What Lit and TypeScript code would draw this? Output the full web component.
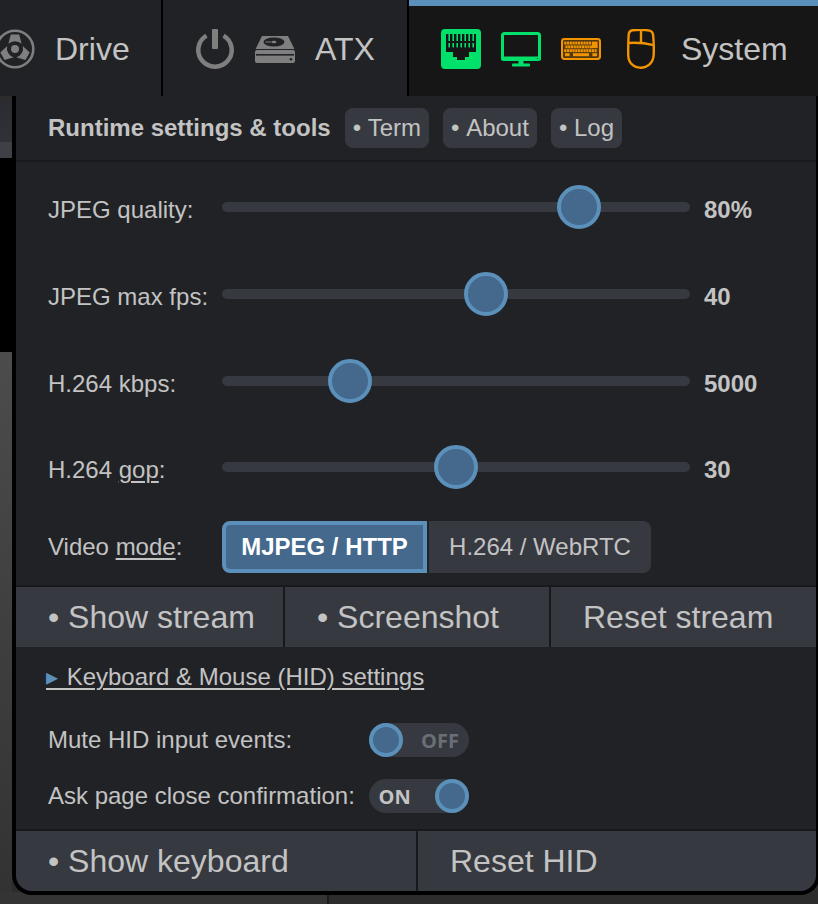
import { LitElement, html, css, svg } from "lit";
import { customElement } from "lit/decorators.js";

const grey = "#7f7f7f";
const green = "#00e06a";
const orange = "#f29400";

const blade = "M15.8 5.500h8.400l2.400 9.300a9.500 9.500 0 0 0-13.200 0z";
const driveIcon = svg`<svg class="ic drive" viewBox="0 0 40 40">
  <circle cx="20" cy="20" r="18.300" fill="none" stroke="${grey}" stroke-width="2.600"/>
  <circle cx="20" cy="20" r="4" fill="${grey}"/>
  <path d="${blade}" fill="${grey}"/>
  <path d="${blade}" fill="${grey}" transform="rotate(120 20 20)"/>
  <path d="${blade}" fill="${grey}" transform="rotate(240 20 20)"/>
</svg>`;

const powerIcon = svg`<svg class="ic" viewBox="0 0 40 40">
  <path d="M11.500 6.600a16.700 16.700 0 1 0 17 0" fill="none" stroke="${grey}" stroke-width="4.500" stroke-linecap="butt"/>
  <rect x="17" y="0" width="6" height="20" rx="1" fill="${grey}"/>
</svg>`;

const hddIcon = svg`<svg class="ic hdd" viewBox="0 0 40 28">
  <path d="M7 1h26l6.400 13H.6z" fill="${grey}"/>
  <rect x="0" y="15" width="40" height="13" rx="2" fill="${grey}"/>
  <rect x="1" y="19" width="38" height="1.600" fill="#212226"/>
  <circle cx="36" cy="24.200" r="1.300" fill="#212226"/>
  <ellipse cx="19" cy="7" rx="10.500" ry="4.600" fill="#212226"/>
  <ellipse cx="19" cy="7" rx="2.400" ry="1.200" fill="${grey}"/>
  <rect x="10.500" y="6.500" width="6" height="1" fill="${grey}"/>
</svg>`;

const pins = [3, 7, 11, 15, 19, 23, 27];
const netIcon = svg`<svg class="ic" viewBox="0 0 40 40">
  <rect width="40" height="40" rx="4" fill="${green}"/>
  <path d="M5 5h30v18h-7v5h-4v3H16v-3h-4v-5H5z" fill="#161616"/>
  ${pins.map((p) => svg`<rect x="${p + 4.4}" y="5" width="1.600" height="7" fill="${green}"/>
    <rect x="${p + 4.4}" y="14" width="1.600" height="4.400" fill="${green}"/>`)}
  <rect x="5" y="12" width="30" height="2" fill="#161616"/>
</svg>`;

const screenIcon = svg`<svg class="ic mon" viewBox="0 0 40 35">
  <rect x="1.500" y="1.500" width="37" height="26" rx="2" fill="none" stroke="${green}" stroke-width="3"/>
  <rect x="0" y="24.500" width="40" height="4" rx="1.500" fill="${green}"/>
  <rect x="17.500" y="28" width="5" height="4" fill="${green}"/>
  <rect x="11" y="31.500" width="18" height="3" rx="1" fill="${green}"/>
  <circle cx="36.600" cy="26.500" r=".6" fill="#161616"/>
</svg>`;

const keyRows: [number, number, number][] = [
  [3.6, 3.2, 10],
  [7.4, 4.4, 10],
  [11.2, 3.2, 12],
];
const kbIcon = svg`<svg class="ic kb" viewBox="0 0 40 22">
  <rect x="1" y="1" width="38" height="20" rx="2.400" fill="none" stroke="${orange}" stroke-width="2"/>
  <rect x="2" y="2" width="36" height="18" fill="${orange}" opacity=".28"/>
  ${keyRows.map(([y, x0, n]) =>
    Array.from({ length: n }, (_, i) => svg`<rect x="${x0 + i * 2.75}" y="${y}" width="2.200" height="2.900" fill="${orange}"/>`)
  )}
  <rect x="31" y="3.600" width="5.600" height="6.500" fill="${orange}"/>
  <rect x="4" y="15.200" width="4.600" height="3" fill="${orange}"/>
  <rect x="12" y="15.200" width="16" height="3" fill="${orange}"/>
  <rect x="31.400" y="15.200" width="4.600" height="3" fill="${orange}"/>
</svg>`;

const mouseIcon = svg`<svg class="ic mouse" viewBox="0 0 28 40">
  <path d="M5.600 1.300c5-.6 12.500-.6 17 .4 2.400.5 3.400 2.400 3.600 5 .6 7 .8 14 .4 20-.5 7-6 12-13 12S1.600 34 1.300 27C1 20 1.300 13 1.600 6.500c.1-2.800 1.400-4.900 4-5.200z" fill="none" stroke="${orange}" stroke-width="2.400"/>
  <path d="M1.600 14c8-.6 17 .2 25 2.200M14 1.200V14.500" fill="none" stroke="${orange}" stroke-width="2.400"/>
</svg>`;

const sliders = [
  { label: html`JPEG quality:`, value: "80%", pos: 0.79 },
  { label: html`JPEG max fps:`, value: "40", pos: 0.571 },
  { label: html`H.264 kbps:`, value: "5000", pos: 0.25 },
  { label: html`H.264 <u>gop</u>:`, value: "30", pos: 0.5 },
];

@customElement("app-root")
export class AppRoot extends LitElement {
  static styles = css`
    :host {
      display: block;
      position: relative;
      width: 818px;
      height: 904px;
      overflow: hidden;
      background: #2c2c2c;
      font-family: "Liberation Sans", Arial, sans-serif;
      color: #c3c3c3;
    }
    u { text-decoration-thickness: 2px; text-underline-offset: 3px; }

    .backdrop { position: absolute; inset: 96px 0 0 0; }
    .b1 { position: absolute; left: 0; top: 4px; width: 12px; height: 42px; background: linear-gradient(#2a2c32, #303238); }
    .b2 { position: absolute; left: 0; top: 46px; width: 12px; height: 16px; background: #3e4046; }
    .b3 { position: absolute; left: 0; top: 62px; width: 12px; height: 194px; background: #000; }
    .b4 { position: absolute; left: 0; top: 256px; width: 12px; bottom: 0; background: linear-gradient(#4c4c4c, #323232); }
    .b5 { position: absolute; left: 0; bottom: 0; width: 327px; height: 12px; background: #343434; }
    .b6 { position: absolute; left: 327px; bottom: 0; width: 2px; height: 12px; background: #1c1c1c; }

    .topbar { position: relative; display: flex; height: 96px; font-size: 32px; }
    .tab { display: flex; align-items: center; background: #212226; border-right: 2px solid #000; box-sizing: border-box; height: 96px; padding-top: 2px; }
    .tab.drive-tab { width: 163px; padding-left: 55px; position: relative; }
    .tab.atx { width: 246px; padding-left: 32px; }
    .tab.system { flex: 1; border-right: 0; background: #161616; border-top: 6px solid #5b90bb; padding: 0 0 4px 32px; }

    .ic { display: block; width: 40px; height: 40px; flex: none; }
    .ic.drive { position: absolute; left: -5px; top: 29px; }
    .ic.hdd { height: 28px; margin: -1px 20px 0 20px; }
    .ic.mon { height: 35px; margin: 0 20px; }
    .ic.kb { height: 22px; }
    .ic.mouse { width: 28px; margin: 0 26px; }

    .panel {
      position: relative;
      width: 808px;
      height: 799px;
      box-sizing: border-box;
      border: 4px solid #000;
      border-top: 0;
      border-radius: 0 0 20px 20px;
      background: #212226;
      overflow: hidden;
      margin-left: 12px;
      font-size: 24px;
    }

    .head {
      height: 64px;
      display: flex;
      align-items: center;
      gap: 14px;
      padding-left: 32px;
      border-bottom: 2px solid #18191c;
    }
    .head b { font-weight: 700; font-size: 24px; }
    .chip {
      display: flex;
      align-items: center;
      height: 40px;
      padding: 0 8px;
      border-radius: 8px;
      background: #363940;
      font-size: 24px;
      white-space: pre;
    }

    .sliders { padding-top: 5px; }
    .row { display: flex; align-items: center; height: 86.67px; padding-left: 32px; }
    .label { width: 174px; flex: none; white-space: nowrap; font-size: 24px; }
    .track { position: relative; width: 468px; height: 10px; border-radius: 5px; background: #363940; margin-bottom: 6px; flex: none; }
    .thumb {
      position: absolute;
      top: -17px;
      width: 44px;
      height: 44px;
      box-sizing: border-box;
      border: 4px solid #5b90bb;
      border-radius: 50%;
      background: #44698d;
    }
    .value { margin-left: 14px; font-weight: 700; font-size: 24px; }

    .mode { display: flex; align-items: center; height: 52px; margin-top: 7.500px; padding-left: 32px; }
    .seg { display: flex; gap: 2px; }
    .seg span { display: flex; align-items: center; justify-content: center; height: 52px; box-sizing: border-box; font-size: 24px; }
    .seg .on {
      width: 205px;
      background: #44698d;
      border: 4px solid #5b90bb;
      border-radius: 8px 0 0 8px;
      color: #fff;
      font-weight: 700;
    }
    .seg .off { width: 222px; background: #363940; border-radius: 0 8px 8px 0; }

    .btns {
      display: grid;
      gap: 2px;
      margin-top: 12px;
      padding-top: 2px;
      background: #18191c;
      font-size: 32px;
    }
    .btns.s { grid-template-columns: 267px 264px 1fr; }
    .btns.k { grid-template-columns: 400px 1fr; margin-top: 0; }
    .btns div { height: 60px; display: flex; align-items: center; padding-left: 32px; background: #363940; white-space: pre; }

    .hid-title { height: 60px; display: flex; align-items: center; padding-left: 30px; }
    .hid-title span.t { text-decoration: underline; text-decoration-thickness: 2px; text-underline-offset: 3px; white-space: pre; font-size: 24px; }
    .hid-title i { font-style: normal; color: #5b90bb; letter-spacing: 2px; }

    .toggles { display: flex; flex-direction: column; gap: 22px; padding: 16px 0 16px 32px; }
    .tr { display: flex; align-items: center; height: 34px; }
    .tr .label { width: 321px; }
    .sw {
      position: relative;
      width: 100px;
      height: 34px;
      border-radius: 17px;
      background: #363940;
      font: 700 20px "Open Sans", sans-serif;
      display: flex;
      align-items: center;
    }
    .sw .knob {
      position: absolute;
      top: 0;
      width: 34px;
      height: 34px;
      box-sizing: border-box;
      border: 4px solid #5b90bb;
      border-radius: 50%;
      background: #44698d;
    }
    .sw.off { color: #6a6e75; }
    .sw.off .knob { left: 0; }
    .sw.off span { margin-left: 52px; }
    .sw.on .knob { right: 0; }
    .sw.on span { margin-left: 9.500px; }
  `;

  render() {
    return html`
      <div class="backdrop">
        <div class="b1"></div><div class="b2"></div><div class="b3"></div>
        <div class="b4"></div><div class="b5"></div><div class="b6"></div>
      </div>
      <div class="topbar">
        <div class="tab drive-tab">${driveIcon}Drive</div>
        <div class="tab atx">${powerIcon}${hddIcon}ATX</div>
        <div class="tab system">${netIcon}${screenIcon}${kbIcon}${mouseIcon}System</div>
      </div>
      <div class="panel">
        <div class="head">
          <b>Runtime settings &amp; tools</b>
          <div class="chip">•&nbsp;Term</div>
          <div class="chip">•&nbsp;About</div>
          <div class="chip">•&nbsp;Log</div>
        </div>
        <div class="sliders">
          ${sliders.map(
            (s) => html`<div class="row">
              <div class="label">${s.label}</div>
              <div class="track"><div class="thumb" style="left:${s.pos * 424}px"></div></div>
              <div class="value">${s.value}</div>
            </div>`
          )}
        </div>
        <div class="mode">
          <div class="label">Video <u>mode</u>:</div>
          <div class="seg"><span class="on">MJPEG / HTTP</span><span class="off">H.264 / WebRTC</span></div>
        </div>
        <div class="btns s">
          <div>• Show stream</div>
          <div>• Screenshot</div>
          <div>Reset stream</div>
        </div>
        <div class="hid-title"><span class="t"><i>▸</i> Keyboard &amp; Mouse (HID) settings</span></div>
        <div class="toggles">
          <div class="tr">
            <div class="label">Mute HID input events:</div>
            <div class="sw off"><div class="knob"></div><span>OFF</span></div>
          </div>
          <div class="tr">
            <div class="label">Ask page close confirmation:</div>
            <div class="sw on"><span>ON</span><div class="knob"></div></div>
          </div>
        </div>
        <div class="btns k">
          <div>• Show keyboard</div>
          <div>Reset HID</div>
        </div>
      </div>
    `;
  }
}
